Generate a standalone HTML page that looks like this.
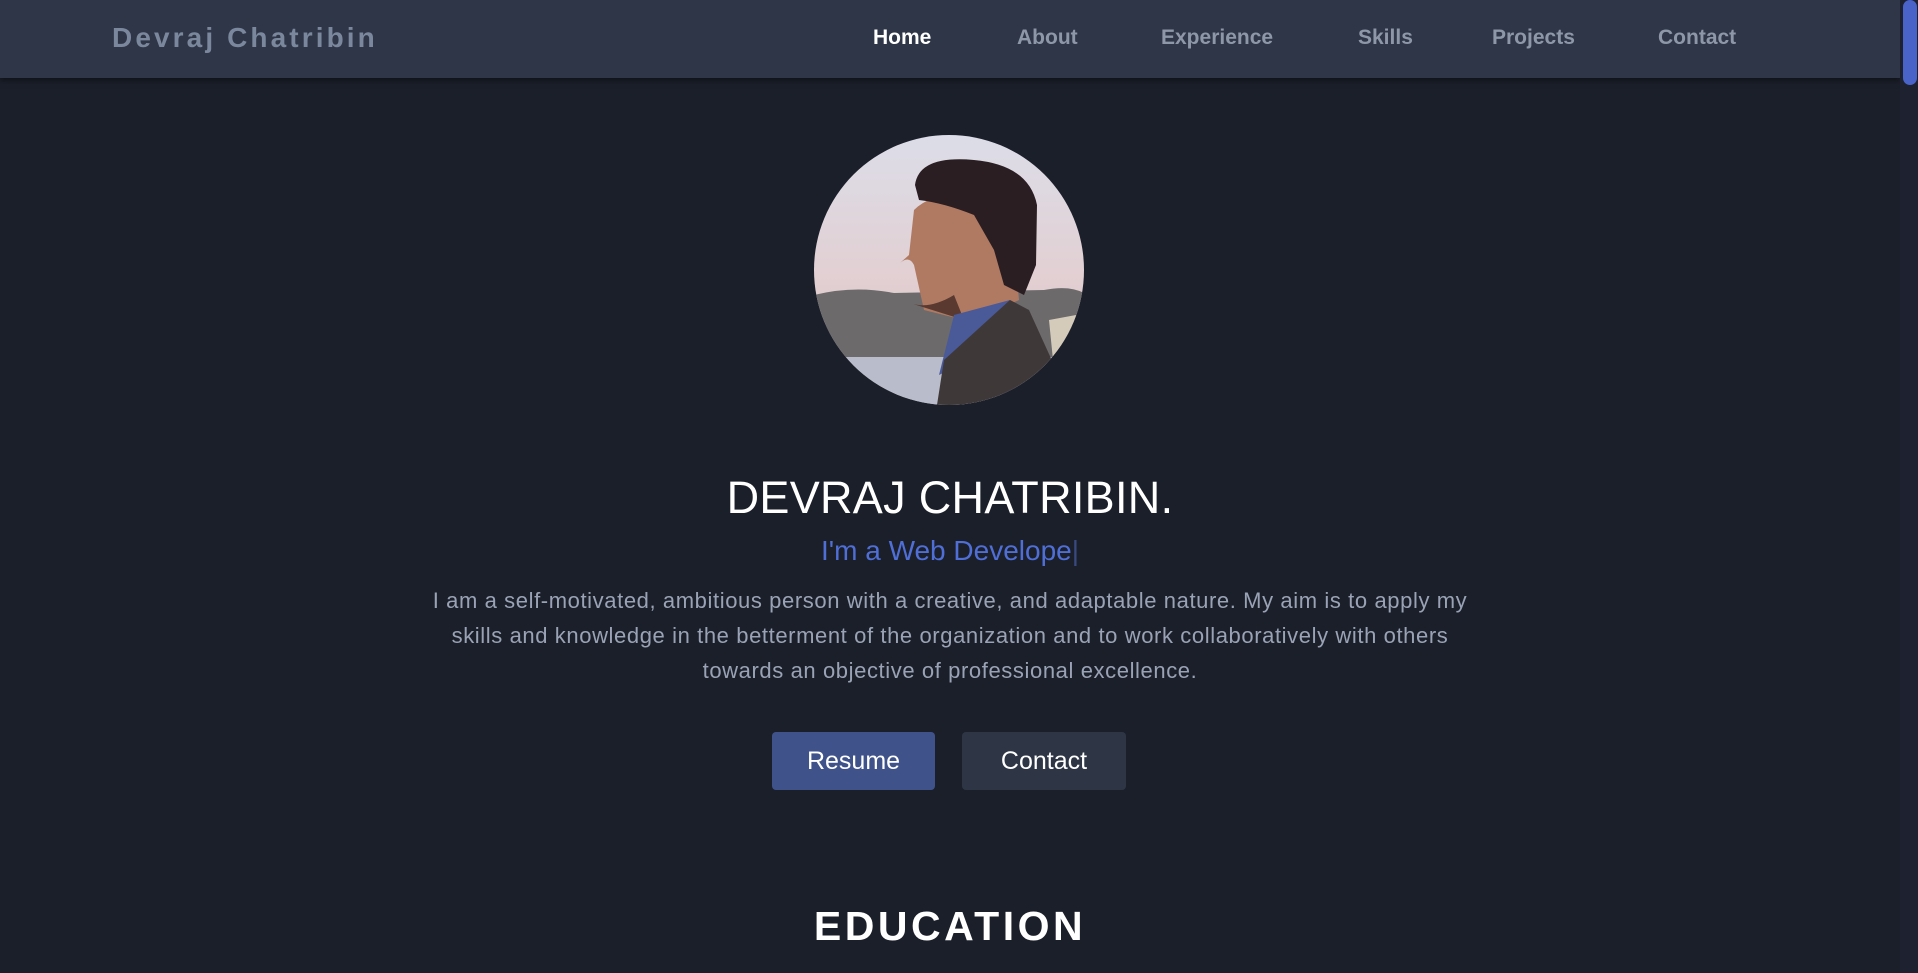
<!DOCTYPE html>
<html><head><meta charset="utf-8"><style>
*{margin:0;padding:0;box-sizing:border-box}
html,body{width:1918px;height:973px;overflow:hidden;background:#1b1f2a;font-family:"Liberation Sans",sans-serif}
nav{position:absolute;left:0;top:0;width:1900px;height:78px;background:#2e3647;box-shadow:0 2px 6px rgba(0,0,0,.5)}
.logo{position:absolute;left:112px;top:22px;font-size:28px;font-weight:bold;letter-spacing:3.1px;color:#7a879c}
.links a{position:absolute;top:26px;font-size:21px;font-weight:bold;color:#8e97a8;text-decoration:none}
.sb{position:absolute;right:0;top:0;width:18px;height:973px;background:#1e2230}
.sb div{position:absolute;left:3px;top:0;width:14px;height:85px;border-radius:7px;background:#4a63c9}
.c{position:absolute;left:0;width:1900px;text-align:center}
.name{top:472px;font-size:45px;color:#fff;letter-spacing:0.3px}
.sub{top:535px;font-size:28px;color:#4f6ed6}
.sub span{color:#3a4a80}
.p{top:583px;left:415px;width:1070px;font-size:22px;line-height:35px;color:#9aa3b5;letter-spacing:0.6px}
.btn{position:absolute;top:732px;height:58px;border-radius:4px;color:#fff;font-size:25px;text-align:center;line-height:58px}
.edu{top:903px;font-size:41px;font-weight:bold;color:#fff;letter-spacing:3.5px}
</style></head><body>
<nav>
<div class="logo">Devraj Chatribin</div>
<div class="links">
<a style="left:873px;color:#fff">Home</a>
<a style="left:1017px">About</a>
<a style="left:1161px">Experience</a>
<a style="left:1358px">Skills</a>
<a style="left:1492px">Projects</a>
<a style="left:1658px">Contact</a>
</div>
</nav>
<div class="sb"><div></div></div>
<svg style="position:absolute;left:814px;top:135px" width="270" height="270" viewBox="0 0 270 270">
<defs>
<clipPath id="cc"><circle cx="135" cy="135" r="135"/></clipPath>
<linearGradient id="sky" x1="0" y1="0" x2="0" y2="1"><stop offset="0" stop-color="#dcdde8"/><stop offset=".55" stop-color="#e2cfd2"/><stop offset="1" stop-color="#c9b9be"/></linearGradient>
</defs>
<g clip-path="url(#cc)">
<rect width="270" height="270" fill="url(#sky)"/>
<path d="M0 160 Q40 150 80 158 L230 155 Q255 150 270 158 L270 225 L0 225Z" fill="#6d6a6c"/>
<rect x="0" y="222" width="270" height="48" fill="#b9bccb"/>
<path d="M110 175 L100 130 Q95 120 86 128 L95 120 L100 75 Q120 55 165 60 L200 110 L205 165 L190 172 L150 185Z" fill="#b07a62"/>
<path d="M101 50 Q105 20 160 25 Q215 30 223 70 L222 130 L210 160 L190 150 L180 115 L160 80 Q130 68 105 65Z" fill="#2a1e22"/>
<path d="M96 168 Q115 175 140 160 L150 185 Z" fill="#5a3a30"/>
<path d="M140 180 L196 165 L205 200 L125 240Z" fill="#4a5a98"/>
<path d="M123 270 L130 225 L196 165 L215 175 L240 230 L240 270Z" fill="#3f3838"/>
<path d="M235 185 L262 180 L255 240 L240 235Z" fill="#efe4cf" opacity=".8"/>
</g>
</svg>
<div class="c name">DEVRAJ CHATRIBIN.</div>
<div class="c sub">I'm a Web Develope<span>|</span></div>
<div class="c p">I am a self-motivated, ambitious person with a creative, and adaptable nature. My aim is to apply my skills and knowledge in the betterment of the organization and to work collaboratively with others towards an objective of professional excellence.</div>
<div class="btn" style="left:772px;width:163px;background:#3f528a">Resume</div>
<div class="btn" style="left:962px;width:164px;background:#2e3646">Contact</div>
<div class="c edu">EDUCATION</div>
</body></html>
